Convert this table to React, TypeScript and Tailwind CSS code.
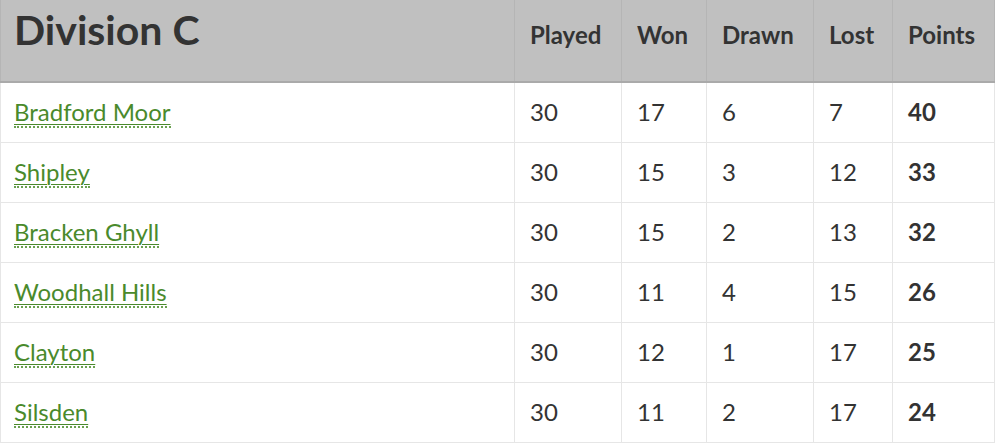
import React from "react";

const rows = [
  { team: "Bradford Moor", played: 30, won: 17, drawn: 6, lost: 7, points: 40 },
  { team: "Shipley", played: 30, won: 15, drawn: 3, lost: 12, points: 33 },
  { team: "Bracken Ghyll", played: 30, won: 15, drawn: 2, lost: 13, points: 32 },
  { team: "Woodhall Hills", played: 30, won: 11, drawn: 4, lost: 15, points: 26 },
  { team: "Clayton", played: 30, won: 12, drawn: 1, lost: 17, points: 25 },
  { team: "Silsden", played: 30, won: 11, drawn: 2, lost: 17, points: 24 },
];

const App = () => {
  return (
    <div className="bg-white w-[995px] h-[443px] overflow-hidden font-['Lato','Liberation_Sans',sans-serif] text-[#333]">
      <table className="w-[994px] table-fixed border-collapse">
        <colgroup>
          <col className="w-[514px]" />
          <col className="w-[107px]" />
          <col className="w-[85px]" />
          <col className="w-[107px]" />
          <col className="w-[79px]" />
          <col className="w-[102px]" />
        </colgroup>
        <thead>
          <tr className="bg-[#c0c0c0] h-[82px] border-b-2 border-[#aaaaaa]">
            <th className="text-left align-top pl-[13px] pr-[15px] pt-[2px] text-[41px] font-bold leading-[56px] border-l border-[#b5b5b5]">
              Division C
            </th>
            {["Played", "Won", "Drawn", "Lost", "Points"].map((h) => (
              <th
                key={h}
                className="text-left align-middle px-[15px] pb-[12px] text-[24px] font-bold border-l border-r border-[#b5b5b5]"
              >
                {h}
              </th>
            ))}
          </tr>
        </thead>
        <tbody>
          {rows.map((r) => (
            <tr key={r.team} className="h-[60px] border-b border-[#e6e6e6]">
              <td className="pl-[13px] pr-[15px] text-[24px] border-l border-[#e6e6e6]">
                <a
                  href="#"
                  className="text-[#4a8a2c] underline underline-offset-[3px] decoration-1 border-b-2 border-dotted border-[#6aa050]"
                >
                  {r.team}
                </a>
              </td>
              <td className="px-[15px] text-[24px] border-l border-[#e6e6e6]">{r.played}</td>
              <td className="px-[15px] text-[24px] border-l border-[#e6e6e6]">{r.won}</td>
              <td className="px-[15px] text-[24px] border-l border-[#e6e6e6]">{r.drawn}</td>
              <td className="px-[15px] text-[24px] border-l border-[#e6e6e6]">{r.lost}</td>
              <td className="px-[15px] text-[24px] font-bold border-l border-r border-[#e6e6e6]">{r.points}</td>
            </tr>
          ))}
        </tbody>
      </table>
    </div>
  );
};

export default App;
